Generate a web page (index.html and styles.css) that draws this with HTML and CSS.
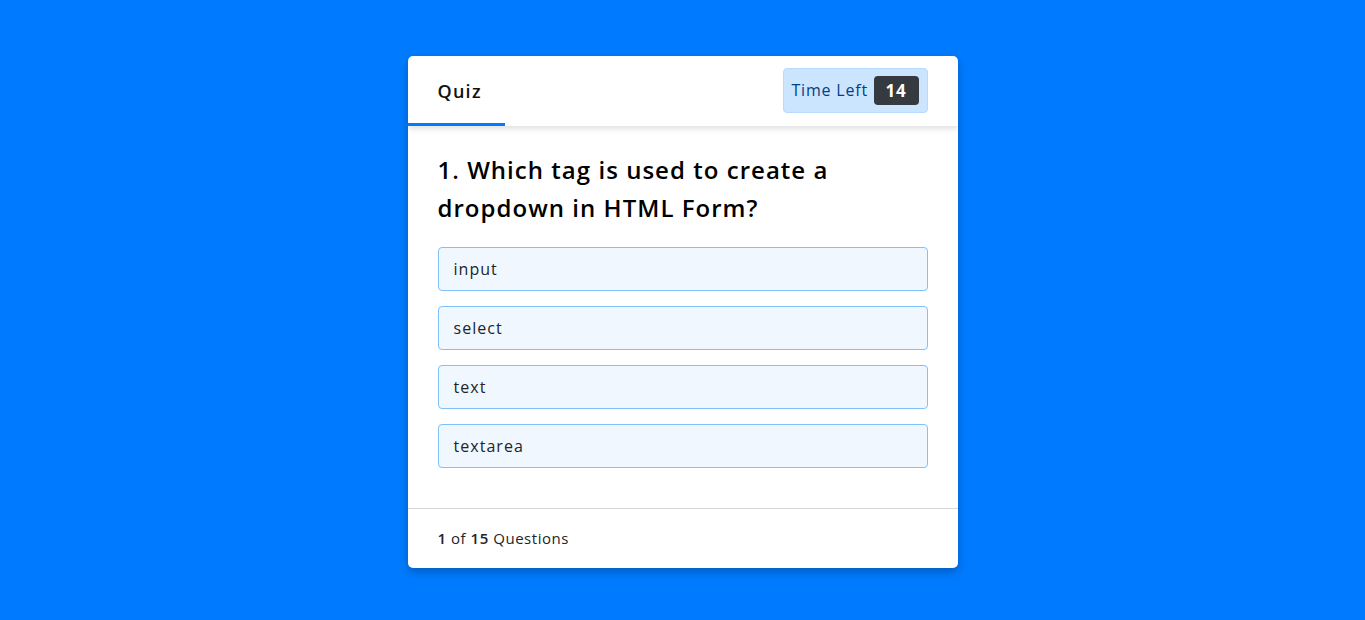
FILE: index.html
```html
<!DOCTYPE html>
<html lang="en">
<head>
<meta charset="utf-8">
<title>Quiz</title>
<link rel="stylesheet" href="styles.css">
</head>
<body>
<div class="page">
  <div class="card">
    <div class="card-header">
      <div class="tab">Quiz</div>
      <div class="timer"><span class="timer-label">Time Left</span><span class="count">14</span></div>
    </div>
    <div class="card-body">
      <h2 class="question">1. Which tag is used to create a dropdown in HTML Form?</h2>
      <ul class="options">
        <li class="option">input</li>
        <li class="option">select</li>
        <li class="option">text</li>
        <li class="option">textarea</li>
      </ul>
    </div>
    <div class="card-footer">
      <span><b>1</b> of <b>15</b> Questions</span>
    </div>
  </div>
</div>
</body>
</html>
```

FILE: styles.css
```css
* { box-sizing: border-box; }
html, body {
  margin: 0;
  height: 100%;
}
body {
  background: #007bff;
  font-family: "Open Sans", "Liberation Sans", sans-serif;
  color: #212529;
}
.page {
  display: flex;
  justify-content: center;
  padding-top: 56px;
}
.card {
  width: 550px;
  background: #fff;
  border-radius: 5px;
  box-shadow: 0 4px 10px rgba(0, 0, 0, 0.25);
  overflow: hidden;
}
.card-header {
  height: 70px;
  display: flex;
  justify-content: space-between;
  align-items: center;
  padding: 0 30px 0 0;
  box-shadow: 0 3px 6px rgba(0, 0, 0, 0.12);
  position: relative;
}
.tab {
  height: 70px;
  width: 97px;
  padding-left: 30px;
  display: flex;
  align-items: center;
  font-size: 18px;
  font-weight: 600;
  letter-spacing: 0.07em;
  color: #111;
  border-bottom: 3px solid #007bff;
  padding-top: 2px;
}
.timer {
  height: 45px;
  width: 145px;
  margin-top: -2px;
  display: flex;
  align-items: center;
  justify-content: space-between;
  padding: 0 8px 0 8px;
  background: #cce5ff;
  border: 1px solid #b8daff;
  border-radius: 4px;
  color: #004085;
  font-size: 16px;
}
.timer-label {
  letter-spacing: 0.05em;
}
.count {
  background: #343a40;
  color: #fff;
  font-weight: 700;
  font-size: 17px;
  letter-spacing: 0.04em;
  width: 45px;
  height: 29px;
  border-radius: 4px;
  display: flex;
  align-items: center;
  justify-content: center;
}
.card-body {
  padding: 25px 30px 25px;
}
.question {
  margin: 0 0 20px;
  font-size: 24px;
  font-weight: 600;
  line-height: 38px;
  letter-spacing: 0.043em;
  color: #000;
  width: 430px;
}
.options {
  list-style: none;
  margin: 0;
  padding: 0;
}
.option {
  height: 44px;
  margin-bottom: 15px;
  padding: 0 15px;
  display: flex;
  align-items: center;
  background: #f0f7ff;
  border: 1px solid #7fc1fb;
  border-radius: 4px;
  font-size: 16px;
  letter-spacing: 0.065em;
  color: #212529;
}
.card-footer {
  height: 60px;
  border-top: 1px solid #d6d6d6;
  padding: 0 30px 2px;
  display: flex;
  align-items: center;
  font-size: 15px;
  letter-spacing: 0.035em;
  color: #212529;
}
.card-footer b {
  font-weight: 600;
}
```
